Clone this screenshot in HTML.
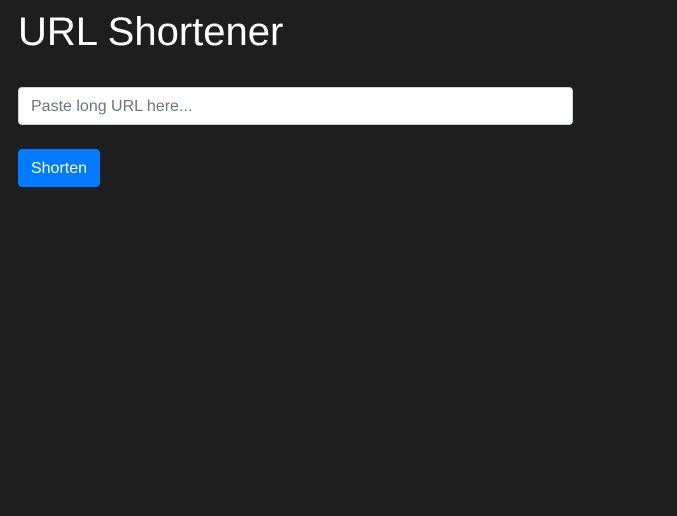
<!DOCTYPE html>
<html><head><style>
html,body{margin:0;padding:0;background:#1e1e1e;width:677px;height:516px;overflow:hidden;font-family:"Liberation Sans",sans-serif;}
h1{position:absolute;left:18px;top:8px;margin:0;font-size:40px;font-weight:400;color:#fff;line-height:48px;}
.inp{position:absolute;left:18px;top:87px;width:553px;height:36px;background:#fff;border:1px solid #ced4da;border-radius:4px;box-sizing:content-box;}
.inp span{position:absolute;left:12px;top:9px;font-size:16px;color:#6c757d;line-height:20px;}
.btn{position:absolute;left:18px;top:149px;width:82px;height:38px;background:#007bff;border-radius:4px;color:#fff;font-size:16px;line-height:40px;text-align:center;}
</style></head><body>
<h1>URL Shortener</h1>
<div class="inp"><span>Paste long URL here...</span></div>
<div class="btn">Shorten</div>
</body></html>
